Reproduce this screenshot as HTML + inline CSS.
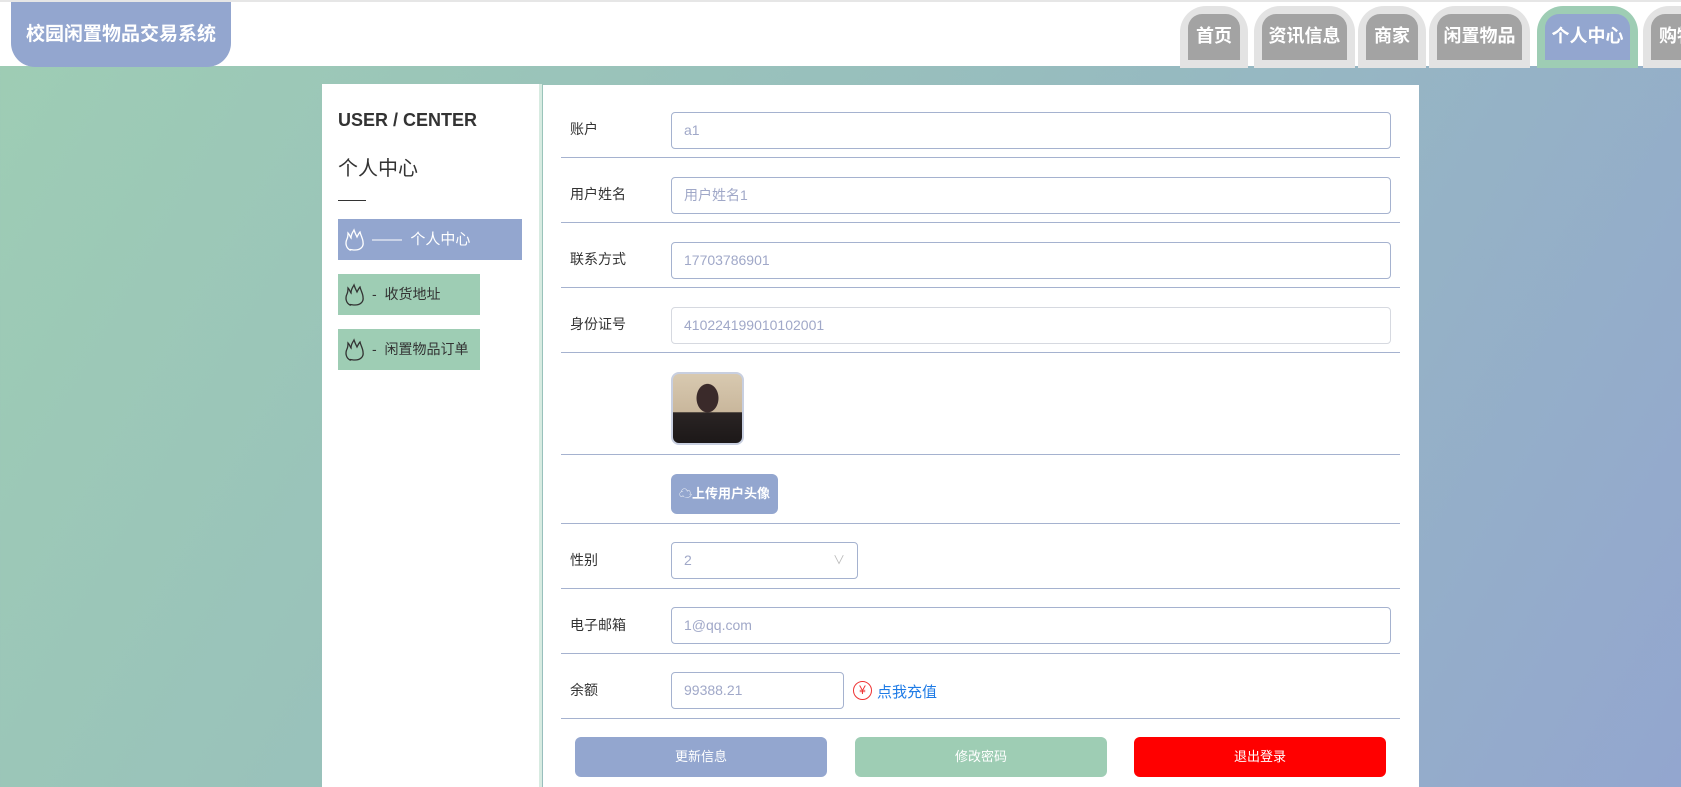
<!DOCTYPE html>
<html><head><meta charset="utf-8"><style>
*{box-sizing:border-box;margin:0;padding:0}
body{width:1681px;height:787px;overflow:hidden;position:relative;font-family:"Liberation Sans","Noto Sans CJK SC",sans-serif;background:linear-gradient(120deg,#9ecdb4 0%,#97bdbe 50%,#93a6cf 100%)}
.hdr{position:absolute;left:0;top:0;width:1681px;height:66px;background:#fff;border-top:2px solid #e6e6e6}
.logo{position:absolute;left:11px;top:0;width:220px;height:65px;background:#93a6cf;border-radius:0 0 24px 24px;color:#fff;font-size:19px;font-weight:bold;line-height:66px;text-align:center}
.tab{position:absolute;top:4px;height:62px;background:#e3e3e3;border-radius:26px 26px 0 0}
.tab span{position:absolute;left:8px;right:8px;top:8px;height:46px;background:#a3a3a3;border-radius:14px 14px 0 0;color:#fff;font-size:18px;font-weight:bold;line-height:44px;text-align:center;white-space:nowrap;overflow:hidden}
.tab.on{background:#9ecdb4}.tab.on span{background:#93a6cf}
.side{position:absolute;left:322px;top:84px;width:220px;height:703px;background:#fff;border-right:3px solid #d7ebe1}
.t1{position:absolute;left:16px;top:26px;font-size:18px;font-weight:bold;color:#333}
.t2{position:absolute;left:16px;top:68px;font-size:20px;color:#333}
.ln{position:absolute;left:16px;top:116px;width:28px;border-top:1px solid #333}
.it{position:absolute;left:16px;height:41px;background:#9ecdb4;color:#333;font-size:14px;line-height:41px;padding-left:6px;display:flex;align-items:center}
.it svg{margin-right:6px}
.it.on{background:#93a6cf;color:#fff;width:184px;font-size:15px}
.main{position:absolute;left:543px;top:85px;width:876px;height:702px;background:#fff}
.row{position:absolute;left:18px;width:839px;border-bottom:1px solid #a5b2cf}
.lab{position:absolute;left:27px;font-size:14px;color:#333}
.inp{position:absolute;left:128px;height:37px;border:1px solid #a5b2cf;border-radius:4px;font-size:14px;color:#a0a8c8;line-height:35px;padding-left:12px}
.btn{position:absolute;top:652px;width:252px;height:40px;border-radius:6px;color:#fff;font-size:13px;text-align:center;line-height:40px}
</style></head><body>
<div class="hdr">
<div class="logo">校园闲置物品交易系统</div>
<div class="tab" style="left:1180px;width:68px"><span>首页</span></div>
<div class="tab" style="left:1254px;width:101px"><span>资讯信息</span></div>
<div class="tab" style="left:1358px;width:68px"><span>商家</span></div>
<div class="tab" style="left:1429px;width:101px"><span>闲置物品</span></div>
<div class="tab on" style="left:1537px;width:101px"><span>个人中心</span></div>
<div class="tab" style="left:1643px;width:101px"><span style="text-align:left;padding-left:8px">购物车</span></div>
</div>
<div class="side">
<div class="t1">USER / CENTER</div>
<div class="t2">个人中心</div>
<div class="ln"></div>
<div class="it on" style="top:135px"><svg width="22" height="24" viewBox="0 0 22 24" fill="none" stroke="#fff" stroke-width="1.3"><path d="M6 22C2 20 1 15 3 11C4 9 4 7 4 5C6 7 6 9 7 10C7 6 9 4 10 2C11 5 12 7 13 9C14 7 15 5 16 4C17 8 19 11 19 14C20 19 16 22 11 22C8 22 6 21 6 22Z"/></svg>—— &nbsp;个人中心</div>
<div class="it" style="top:190px;width:142px"><svg width="22" height="24" viewBox="0 0 22 24" fill="none" stroke="#333" stroke-width="1.3"><path d="M6 22C2 20 1 15 3 11C4 9 4 7 4 5C6 7 6 9 7 10C7 6 9 4 10 2C11 5 12 7 13 9C14 7 15 5 16 4C17 8 19 11 19 14C20 19 16 22 11 22C8 22 6 21 6 22Z"/></svg>- &nbsp;收货地址</div>
<div class="it" style="top:245px;width:142px"><svg width="22" height="24" viewBox="0 0 22 24" fill="none" stroke="#333" stroke-width="1.3"><path d="M6 22C2 20 1 15 3 11C4 9 4 7 4 5C6 7 6 9 7 10C7 6 9 4 10 2C11 5 12 7 13 9C14 7 15 5 16 4C17 8 19 11 19 14C20 19 16 22 11 22C8 22 6 21 6 22Z"/></svg>- &nbsp;闲置物品订单</div>
</div>
<div class="main">
<div class="row" style="top:0;height:73px"></div>
<div class="lab" style="top:34px">账户</div><div class="inp" style="top:27px;width:720px">a1</div>
<div class="row" style="top:73px;height:65px"></div>
<div class="lab" style="top:99px">用户姓名</div><div class="inp" style="top:92px;width:720px">用户姓名1</div>
<div class="row" style="top:138px;height:65px"></div>
<div class="lab" style="top:164px">联系方式</div><div class="inp" style="top:157px;width:720px">17703786901</div>
<div class="row" style="top:203px;height:65px"></div>
<div class="lab" style="top:229px">身份证号</div><div class="inp" style="top:222px;width:720px;border-color:#d6d9e0">410224199010102001</div>
<div class="row" style="top:268px;height:102px"></div>
<div style="position:absolute;left:128px;top:287px;width:73px;height:73px;border-radius:8px;border:2px solid #c8cfe0;background:radial-gradient(ellipse at 50% 35%,#3a2a2a 0 22%,transparent 23%),linear-gradient(180deg,#d8c9b0 0%,#c9b79c 55%,#2a2424 56%,#1c1818 100%)"></div>
<div class="row" style="top:370px;height:69px"></div>
<div style="position:absolute;left:128px;top:389px;width:107px;height:40px;border-radius:6px;background:#93a6cf;color:#fff;font-size:13px;font-weight:bold;line-height:40px;text-align:center">☁上传用户头像</div>
<div class="row" style="top:439px;height:65px"></div>
<div class="lab" style="top:465px">性别</div><div class="inp" style="top:457px;width:187px">2<span style="position:absolute;right:12px;color:#bbb;font-size:12px">∨</span></div>
<div class="row" style="top:504px;height:65px"></div>
<div class="lab" style="top:530px">电子邮箱</div><div class="inp" style="top:522px;width:720px">1@qq.com</div>
<div class="row" style="top:569px;height:65px"></div>
<div class="lab" style="top:595px">余额</div><div class="inp" style="top:587px;width:173px">99388.21</div>
<div style="position:absolute;left:310px;top:596px;width:19px;height:19px;border:1.5px solid #e33;border-radius:50%;color:#e33;font-size:12px;text-align:center;line-height:16px">¥</div>
<div style="position:absolute;left:334px;top:596px;font-size:15px;color:#1e7be6">点我充值</div>
<div class="btn" style="left:32px;background:#93a6cf">更新信息</div>
<div class="btn" style="left:312px;background:#9ecdb4">修改密码</div>
<div class="btn" style="left:591px;background:#ff0000">退出登录</div>
</div>
</body></html>
